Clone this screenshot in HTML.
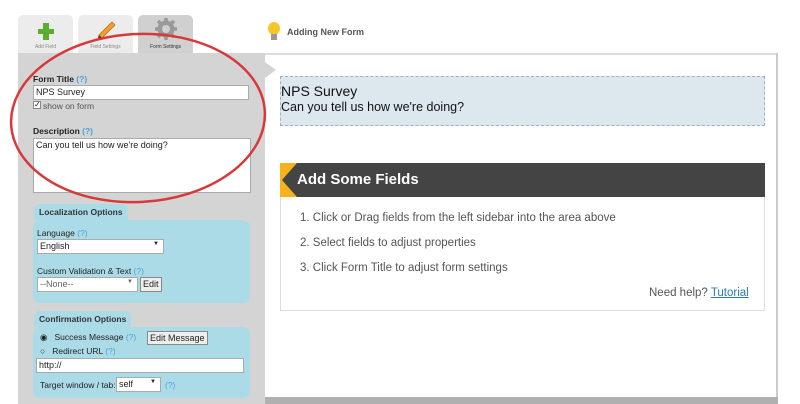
<!DOCTYPE html>
<html><head><style>
*{margin:0;padding:0;box-sizing:border-box}
body{width:800px;height:404px;overflow:hidden;background:#fff;font-family:"Liberation Sans",sans-serif;position:relative;font-size:9px;color:#222}
.a{position:absolute}
.tab{position:absolute;top:15px;width:55px;height:38px;background:#ececec;border-radius:5px 5px 0 0;font-size:5px;color:#888;text-align:center}
.tab span{position:absolute;bottom:3px;left:0;right:0}
.q{color:#4aa3d8}
.inp{position:absolute;background:#fff;border:1px solid #aaa;font-size:9px;padding:1px 2px}
.blue{position:absolute;background:#acdbe8;border-radius:7px}
.btab{position:absolute;background:#acdbe8;border-radius:6px 6px 0 0;font-size:8.5px;font-weight:bold;color:#333;padding:3px 5px}
.sel::after{content:"▼";position:absolute;right:4px;top:1px;font-size:6px}
.btn{position:absolute;background:#eee;border:1px solid #888;font-size:9px;padding:1px 2px}
.step{position:absolute;left:300px;font-size:11.5px;color:#555}
</style></head><body>
<div class="tab" style="left:18px"><div class="a" style="left:20px;top:14px;width:16px;height:5px;background:#5aae2e"></div><div class="a" style="left:25px;top:8px;width:6px;height:17px;background:#5aae2e"></div><span>Add Field</span></div>
<div class="tab" style="left:78px"><svg class="a" style="left:16px;top:4px" width="22" height="24"><path d="M18 3 L21 6 L8 19 L4 21 L5 16 Z" fill="#f0a030" stroke="#c07010" stroke-width="0.8"/><path d="M4 21 L5 16 L8 19 Z" fill="#333"/></svg><span>Field Settings</span></div>
<div class="tab" style="left:138px;background:#d0d0d0;color:#333"><svg class="a" style="left:17px;top:3px" width="22" height="22"><circle cx="11" cy="11" r="6.5" fill="none" stroke="#999" stroke-width="4"/><g stroke="#999" stroke-width="3.5"><line x1="11" y1="0" x2="11" y2="22"/><line x1="0" y1="11" x2="22" y2="11"/><line x1="3" y1="3" x2="19" y2="19"/><line x1="19" y1="3" x2="3" y2="19"/></g><circle cx="11" cy="11" r="4" fill="#d0d0d0"/></svg><span>Form Settings</span></div>
<div class="a" style="left:268px;top:22px;width:12px;height:13px;background:#f6c52a;border-radius:50%"></div>
<div class="a" style="left:271px;top:34px;width:6px;height:6px;background:#999"></div>
<div class="a" style="left:287px;top:27px;font-size:9px;color:#555;font-weight:bold">Adding New Form</div>
<div class="a" style="left:265px;top:53px;width:513px;height:2px;background:#ddd"></div>
<div class="a" style="left:18px;top:53px;width:247px;height:351px;background:#d4d4d4"></div>
<div class="a" style="left:265px;top:62px;width:0;height:0;border-top:8px solid transparent;border-bottom:8px solid transparent;border-left:11px solid #d4d4d4"></div>
<div class="a" style="left:776px;top:53px;width:2px;height:351px;background:#ccc"></div>
<div class="a" style="left:265px;top:397px;width:513px;height:7px;background:#b0b0b0"></div>

<div class="a" style="left:33px;top:74px;font-weight:bold;font-size:8.5px">Form Title <span class="q">(?)</span></div>
<div class="inp" style="left:33px;top:85px;width:216px;height:15px">NPS Survey</div>
<div class="a" style="left:33px;top:101px;width:8px;height:8px;border:1px solid #888;background:#fff;font-size:8px;line-height:6px;text-align:center">✓</div>
<div class="a" style="left:43px;top:101px;font-size:8.5px;color:#555">show on form</div>
<div class="a" style="left:33px;top:126px;font-weight:bold;font-size:8.5px">Description <span class="q">(?)</span></div>
<div class="inp" style="left:33px;top:138px;width:218px;height:55px">Can you tell us how we're doing?</div>

<div class="btab" style="left:34px;top:204px">Localization Options</div>
<div class="blue" style="left:33px;top:220px;width:217px;height:83px"></div>
<div class="a" style="left:37px;top:228px;font-size:8.5px">Language <span class="q">(?)</span></div>
<div class="inp sel" style="left:37px;top:239px;width:127px;height:15px">English</div>
<div class="a" style="left:37px;top:266px;font-size:8.5px">Custom Validation &amp; Text <span class="q">(?)</span></div>
<div class="inp sel" style="left:37px;top:277px;width:101px;height:15px;color:#666">--None--</div>
<div class="btn" style="left:140px;top:277px;height:15px">Edit</div>

<div class="btab" style="left:34px;top:311px">Confirmation Options</div>
<div class="blue" style="left:33px;top:327px;width:217px;height:71px"></div>
<div class="a" style="left:40px;top:332px;font-size:8.5px">◉ &nbsp; Success Message <span class="q">(?)</span></div>
<div class="btn" style="left:147px;top:331px;height:14px">Edit Message</div>
<div class="a" style="left:40px;top:346px;font-size:8.5px">○ &nbsp; Redirect URL <span class="q">(?)</span></div>
<div class="inp" style="left:36px;top:358px;width:208px;height:15px">http://</div>
<div class="a" style="left:40px;top:380px;font-size:8.5px">Target window / tab:</div>
<div class="inp sel" style="left:116px;top:377px;width:45px;height:15px">self</div>
<div class="a q" style="left:165px;top:380px;font-size:8.5px">(?)</div>

<div class="a" style="left:280px;top:76px;width:485px;height:50px;background:#dde8ee;border:1px dashed #aac"></div>
<div class="a" style="left:281px;top:83px;font-size:14px;color:#111">NPS Survey</div>
<div class="a" style="left:281px;top:100px;font-size:12.5px;color:#111">Can you tell us how we're doing?</div>

<div class="a" style="left:280px;top:163px;width:485px;height:34px;background:#444"></div>
<div class="a" style="left:280px;top:163px;width:17px;height:34px;background:#f5b21d"></div>
<div class="a" style="left:282px;top:163px;width:0;height:0;border-top:17px solid transparent;border-bottom:17px solid transparent;border-right:15px solid #444"></div>
<div class="a" style="left:297px;top:171px;font-size:15px;font-weight:bold;color:#fff">Add Some Fields</div>
<div class="a" style="left:280px;top:197px;width:485px;height:114px;border:1px solid #ddd;border-top:0"></div>
<div class="step" style="top:212px">1. Click or Drag fields from the left sidebar into the area above</div>
<div class="step" style="top:237px">2. Select fields to adjust properties</div>
<div class="step" style="top:262px">3. Click Form Title to adjust form settings</div>
<div class="a" style="left:649px;top:287px;font-size:11.5px;color:#555">Need help? <span style="color:#2a7ab8;text-decoration:underline">Tutorial</span></div>

<svg class="a" style="left:0;top:0" width="800" height="404"><ellipse cx="138" cy="118" rx="127" ry="84" fill="none" stroke="#d9383a" stroke-width="2.5" transform="rotate(-3 138 118)"/></svg>
</body></html>
